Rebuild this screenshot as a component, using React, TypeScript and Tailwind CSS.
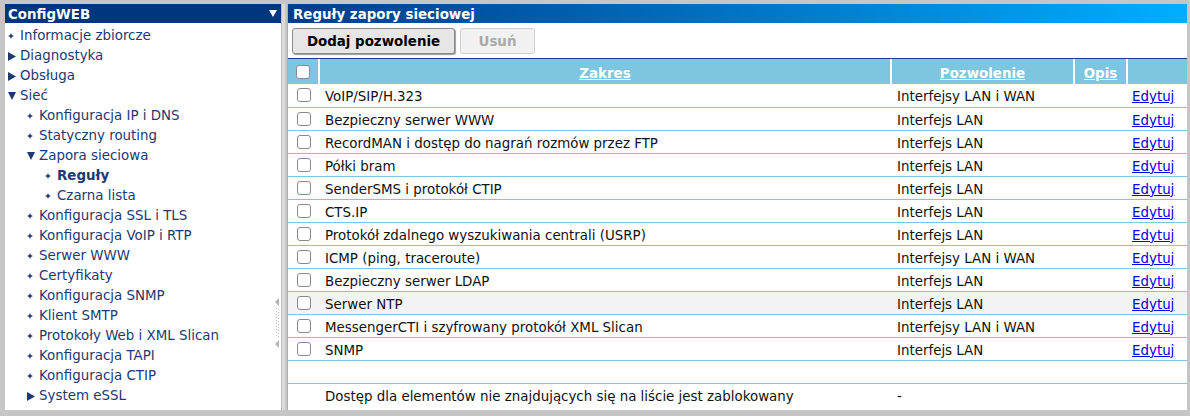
import React from "react";

const font = { fontFamily: '"DejaVu Sans", Verdana, sans-serif' };

function Bullet() {
  return (
    <svg width="6" height="6" viewBox="0 0 6 6" className="shrink-0">
      <path d="M3 0 L3.9 2.1 L6 3 L3.9 3.9 L3 6 L2.1 3.9 L0 3 L2.1 2.1 Z" fill="#1b3a73" />
    </svg>
  );
}
function TriRight() {
  return (
    <svg width="8" height="9" viewBox="0 0 8 9" className="shrink-0">
      <path d="M0 0 L8 4.5 L0 9 Z" fill="#1b3a73" />
    </svg>
  );
}
function TriDown() {
  return (
    <svg width="8" height="8" viewBox="0 0 8 8" className="shrink-0">
      <path d="M0 0 L8 0 L4 8 Z" fill="#1b3a73" />
    </svg>
  );
}

type NavItem = { t: string; l: number; k: "b" | "r" | "d"; bold?: boolean };
const nav: NavItem[] = [
  { t: "Informacje zbiorcze", l: 0, k: "b" },
  { t: "Diagnostyka", l: 0, k: "r" },
  { t: "Obsługa", l: 0, k: "r" },
  { t: "Sieć", l: 0, k: "d" },
  { t: "Konfiguracja IP i DNS", l: 1, k: "b" },
  { t: "Statyczny routing", l: 1, k: "b" },
  { t: "Zapora sieciowa", l: 1, k: "d" },
  { t: "Reguły", l: 2, k: "b", bold: true },
  { t: "Czarna lista", l: 2, k: "b" },
  { t: "Konfiguracja SSL i TLS", l: 1, k: "b" },
  { t: "Konfiguracja VoIP i RTP", l: 1, k: "b" },
  { t: "Serwer WWW", l: 1, k: "b" },
  { t: "Certyfikaty", l: 1, k: "b" },
  { t: "Konfiguracja SNMP", l: 1, k: "b" },
  { t: "Klient SMTP", l: 1, k: "b" },
  { t: "Protokoły Web i XML Slican", l: 1, k: "b" },
  { t: "Konfiguracja TAPI", l: 1, k: "b" },
  { t: "Konfiguracja CTIP", l: 1, k: "b" },
  { t: "System eSSL", l: 1, k: "r" },
];

const rows: [string, string][] = [
  ["VoIP/SIP/H.323", "Interfejsy LAN i WAN"],
  ["Bezpieczny serwer WWW", "Interfejs LAN"],
  ["RecordMAN i dostęp do nagrań rozmów przez FTP", "Interfejs LAN"],
  ["Półki bram", "Interfejs LAN"],
  ["SenderSMS i protokół CTIP", "Interfejs LAN"],
  ["CTS.IP", "Interfejs LAN"],
  ["Protokół zdalnego wyszukiwania centrali (USRP)", "Interfejs LAN"],
  ["ICMP (ping, traceroute)", "Interfejsy LAN i WAN"],
  ["Bezpieczny serwer LDAP", "Interfejs LAN"],
  ["Serwer NTP", "Interfejs LAN"],
  ["MessengerCTI i szyfrowany protokół XML Slican", "Interfejsy LAN i WAN"],
  ["SNMP", "Interfejs LAN"],
];

function Checkbox() {
  return <div className="w-[14px] h-[14px] rounded-[3px] border border-[#8a8a94] bg-white" />;
}

const cell = "p-0 pt-[4px] leading-[18px] text-[#111] whitespace-nowrap";

export default function App() {
  return (
    <div
      style={font}
      className="w-[1190px] h-[416px] bg-[#c6c6c6] flex pt-[4px] pb-[6px] pl-[5px] pr-[3px] overflow-hidden text-[13.4px] leading-[20px]"
    >
      {/* Left panel */}
      <div className="relative w-[276px] h-[406px] shrink-0 bg-white flex flex-col overflow-hidden">
        <div className="h-[19px] bg-[#003580] flex items-center justify-between pl-[3px] pr-[4px] shrink-0">
          <span className="text-white font-bold leading-[19px] pt-[1px]">ConfigWEB</span>
          <svg width="8" height="7" viewBox="0 0 8 7">
            <path d="M0 0 L8 0 L4 7 Z" fill="#ffffff" />
          </svg>
        </div>
        <div className="pt-[3px] flex flex-col shrink-0">
          {nav.map((n, i) => (
            <div
              key={i}
              className={
                "h-[20px] flex items-center shrink-0 " +
                (n.l === 0 ? "pl-[3px]" : n.l === 1 ? "pl-[22px]" : "pl-[40px]")
              }
            >
              <div className="w-[12px] flex items-center shrink-0 h-full">
                {n.k === "b" ? <Bullet /> : n.k === "r" ? <TriRight /> : <TriDown />}
              </div>
              <span
                className={
                  "text-[#1b3a73] whitespace-nowrap leading-[20px] " + (n.bold ? "font-bold" : "")
                }
              >
                {n.t}
              </span>
            </div>
          ))}
        </div>
        {/* splitter grip */}
        <svg className="absolute right-[1px] top-[294px]" width="5" height="50" viewBox="0 0 5 50">
          <path d="M0 4 L4 0 L4 8 Z" fill="#b4b4b4" />
          {Array.from({ length: 10 }).map((_, i) => (
            <g key={i}>
              <rect x="1" y={10 + i * 3} width="1" height="1" fill="#b8b8b8" />
              <rect x="3" y={11 + i * 3} width="1" height="1" fill="#b8b8b8" />
            </g>
          ))}
          <path d="M0 46 L4 42 L4 50 Z" fill="#b4b4b4" />
        </svg>
      </div>

      {/* splitter */}
      <div className="w-[6px] shrink-0 flex">
        <div className="w-[1px] bg-[#bdbdbd]" />
        <div className="w-[3px] bg-[#dcdcdc]" />
        <div className="w-[2px] bg-[#c6c6c6]" />
      </div>

      {/* Right panel */}
      <div className="flex-1 h-[406px] bg-white flex flex-col overflow-hidden border-l border-[#b0b0b0]">
        <div className="h-[19px] shrink-0 bg-gradient-to-r from-[#003c8c] to-[#00aeff] flex items-center pl-[5px]">
          <span className="text-white font-bold leading-[19px] pt-[1px]">Reguły zapory sieciowej</span>
        </div>
        <div className="h-[35px] shrink-0 flex items-start pt-[5px] pl-[4px] gap-[5px]">
          <button className="h-[26px] w-[163px] rounded-[3px] bg-[#e6e6e6] border border-[#8c8c8c] shadow-[1px_1px_1px_#9a9a9a] font-bold text-black leading-[24px] pt-[1px]">
            Dodaj pozwolenie
          </button>
          <button className="h-[26px] w-[75px] rounded-[3px] bg-[#f1f1f1] border border-[#d0d0d0] font-bold text-[#a9a9a9] leading-[24px] pt-[1px]">
            Usuń
          </button>
        </div>
        <div className="h-[1px] bg-[#1e3c8a] shrink-0" />
        <table className="border-collapse table-fixed w-[899px] shrink-0">
          <colgroup>
            <col className="w-[31px]" />
            <col className="w-[572px]" />
            <col className="w-[183px]" />
            <col className="w-[53px]" />
            <col className="w-[60px]" />
          </colgroup>
          <thead>
            <tr className="h-[25px] bg-[#7ec5e0]">
              <th className="border-r-2 border-white p-0">
                <div className="flex justify-center">
                  <Checkbox />
                </div>
              </th>
              <th className="border-r-2 border-white p-0 pt-[4px] leading-[19px] text-white font-bold underline">Zakres</th>
              <th className="border-r-2 border-white p-0 pt-[4px] leading-[19px] text-white font-bold underline">Pozwolenie</th>
              <th className="border-r-2 border-white p-0 pt-[4px] leading-[19px] text-white font-bold underline">Opis</th>
              <th className="p-0" />
            </tr>
          </thead>
          <tbody>
            {rows.map(([z, p], i) => (
              <tr key={i} className={"h-[23px] border-b border-[#7ec5e0] " + (i === 9 ? "bg-[#f3f3f3]" : "")}>
                <td className="p-0">
                  <div className="flex justify-center">
                    <Checkbox />
                  </div>
                </td>
                <td className={cell + " pl-[6px]"}>{z}</td>
                <td className={cell + " pl-[6px]"}>{p}</td>
                <td className="p-0" />
                <td className={cell + " pl-[5px]"}>
                  <span className="text-[#0000ee] underline">Edytuj</span>
                </td>
              </tr>
            ))}
            <tr className="h-[23px] border-b border-[#7ec5e0]">
              <td colSpan={5} />
            </tr>
            <tr className="h-[23px]">
              <td className="p-0" />
              <td className={cell + " pl-[6px]"}>
                Dostęp dla elementów nie znajdujących się na liście jest zablokowany
              </td>
              <td className={cell + " pl-[6px]"}>-</td>
              <td className="p-0" />
              <td className="p-0" />
            </tr>
          </tbody>
        </table>
      </div>
    </div>
  );
}
